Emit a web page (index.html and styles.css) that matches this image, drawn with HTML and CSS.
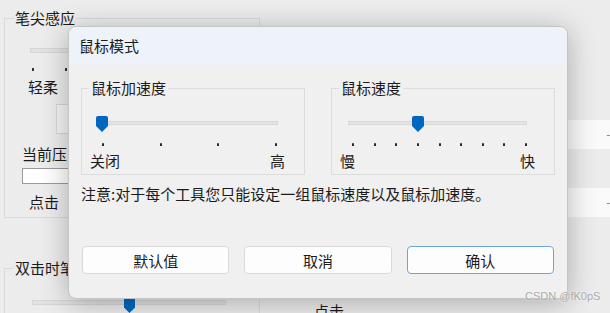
FILE: index.html
```html
<!DOCTYPE html>
<html lang="zh-CN">
<head>
  <meta charset="UTF-8" />
  <meta name="viewport" content="width=device-width, initial-scale=1.0" />
  <title>鼠标模式</title>
  <link rel="stylesheet" href="styles.css">
</head>
<body>
  <div class="backdrop">
    <div class="left-col">
      <fieldset class="bg-group first">
        <legend>笔尖感应</legend>
        <div class="bg-track"></div>
        <div class="bg-ticks"><span></span><span></span></div>
        <div class="bg-label soft">轻柔</div>
        <div class="bg-box"></div>
        <div class="bg-label press">当前压力</div>
        <div class="bg-input"></div>
        <div class="bg-label click">点击</div>
      </fieldset>
      <fieldset class="bg-group second">
        <legend>双击时笔尖</legend>
        <div class="bg-track wide">
          <div class="bg-handle"></div>
        </div>
      </fieldset>
    </div>
    <div class="mid-col">
      <div class="bg-label far">点击</div>
    </div>
    <div class="right-col">
      <div class="bg-field">-</div>
      <div class="bg-field">-</div>
    </div>
  </div>

  <div class="dialog">
    <div class="titlebar">鼠标模式</div>
    <div class="dialog-body">
      <div class="groups">
        <fieldset class="group">
          <legend>鼠标加速度</legend>
          <div class="slider accel">
            <div class="track"></div>
            <div class="handle" style="left: -6px"></div>
          </div>
          <div class="ticks accel-ticks">
            <span></span><span></span><span></span><span></span>
          </div>
          <div class="ends"><span>关闭</span><span>高</span></div>
        </fieldset>
        <fieldset class="group">
          <legend>鼠标速度</legend>
          <div class="slider speed">
            <div class="track"></div>
            <div class="handle" style="left: 64px"></div>
          </div>
          <div class="ticks speed-ticks">
            <span></span><span></span><span></span><span></span><span></span>
            <span></span><span></span><span></span><span></span>
          </div>
          <div class="ends"><span>慢</span><span>快</span></div>
        </fieldset>
      </div>
      <p class="note">注意:对于每个工具您只能设定一组鼠标速度以及鼠标加速度。</p>
      <div class="buttons">
        <button class="btn">默认值</button>
        <button class="btn">取消</button>
        <button class="btn primary">确认</button>
      </div>
    </div>
  </div>

  <div class="watermark">CSDN @fK0pS</div>
</body>
</html>
```

FILE: styles.css
```css
body {
  margin: 0;
  width: 610px;
  height: 313px;
  overflow: hidden;
  position: relative;
  background: #ececec;
  font-family: "Noto Sans CJK SC", "Noto Sans", sans-serif;
  color: #1b1b1b;
}

/* window behind the dialog */
.backdrop {
  display: flex;
  height: 313px;
}
.left-col {
  width: 256px;
  padding-left: 4px;
}
.bg-group {
  border: 1px solid #dadada;
  margin: 0;
  padding: 0;
  height: 210px;
  box-sizing: border-box;
}
.bg-group legend {
  font-size: 15px;
  line-height: 20px;
  padding: 0 1px;
  margin-left: 9px;
}
.bg-group.first {
  margin-top: 8px;
}
.bg-group.second {
  margin-top: 40px;
  height: 60px;
}
.bg-track {
  margin: 20px 0 0 25px;
  width: 160px;
  height: 3px;
  background: #e2e2e2;
  border: 1px solid #d6d6d6;
}
.bg-track.wide {
  margin: 22px 0 0 27px;
  width: 192px;
  position: relative;
}
.bg-handle {
  position: absolute;
  left: 91px;
  top: -2px;
  width: 11px;
  height: 14px;
  background: #0067c0;
  clip-path: polygon(0 0, 100% 0, 100% 60%, 50% 100%, 0 60%);
}
.bg-ticks {
  display: flex;
  gap: 31px;
  margin: 15px 0 0 27px;
}
.bg-ticks span {
  width: 2px;
  height: 3px;
  background: #333;
}
.bg-label {
  font-size: 15px;
  line-height: 20px;
}
.bg-label.soft {
  margin: 6px 0 0 23px;
}
.bg-box {
  margin: 7px 0 0 51px;
  height: 28px;
  border: 1px solid #d6d6d6;
  border-right: none;
  background: #f4f4f4;
}
.bg-label.press {
  margin: 10px 0 0 17px;
}
.bg-input {
  margin: 4px 0 0 17px;
  height: 14px;
  border: 1px solid #9a9a9a;
  border-right: none;
  background: #fff;
}
.bg-label.click {
  margin: 8px 0 0 24px;
}
.mid-col {
  width: 290px;
}
.bg-label.far {
  margin: 301px 0 0 54px;
}
.right-col {
  flex: 1;
  padding-top: 120px;
  display: flex;
  flex-direction: column;
  gap: 39px;
}
.bg-field {
  height: 29px;
  background: #fafafa;
  font-size: 10px;
  line-height: 28px;
  text-align: right;
  color: #555;
}

/* dialog */
.dialog {
  position: absolute;
  left: 68px;
  top: 26px;
  width: 500px;
  height: 273px;
  box-sizing: border-box;
  border: 1px solid #c4c4c4;
  border-radius: 8px;
  background: #f0f0f0;
  overflow: hidden;
  box-shadow: 0 4px 28px rgba(0, 0, 0, 0.28);
}
.titlebar {
  height: 38px;
  line-height: 38px;
  padding-left: 10px;
  font-size: 15px;
  background: #eef2f9;
}
.dialog-body {
  padding: 0 12px;
}
.groups {
  display: flex;
  gap: 26px;
  margin-top: 12px;
}
.group {
  width: 224px;
  height: 98px;
  box-sizing: border-box;
  margin: 0;
  padding: 0;
  border: 1px solid #dcdcdc;
}
.group legend {
  font-size: 15px;
  line-height: 22px;
  padding: 0 2px;
  margin-left: 7px;
}
.slider {
  position: relative;
  height: 16px;
  margin-top: 17px;
}
.track {
  position: absolute;
  left: 0;
  right: 0;
  top: 5px;
  height: 4px;
  background: #e4e4e4;
  border: 1px solid #d8d8d8;
  box-sizing: border-box;
}
.handle {
  position: absolute;
  top: 0;
  width: 12px;
  height: 16px;
  border-radius: 2px 2px 0 0;
  background: #0067c0;
  clip-path: polygon(0 0, 100% 0, 100% 62%, 50% 100%, 0 62%);
}
.accel {
  margin-left: 20px;
  width: 176px;
}
.speed {
  margin-left: 16px;
  width: 179px;
}
.ticks {
  display: flex;
  justify-content: space-between;
  margin: 11px 0 0 20px;
  width: 175px;
  height: 3px;
}
.ticks span {
  width: 2px;
  height: 3px;
  background: #2a2a2a;
  border-radius: 1px 1px 0 0;
}
.ends {
  display: flex;
  justify-content: space-between;
  margin: 5px 19px 0 8px;
  font-size: 15px;
  line-height: 20px;
}
.note {
  margin: 9px 0 0 0;
  font-size: 15px;
  line-height: 20px;
}
.buttons {
  display: flex;
  gap: 15px;
  margin-top: 42px;
  padding: 0 1px;
}
.btn {
  flex: 1;
  height: 28px;
  font-family: inherit;
  font-size: 15px;
  color: #1b1b1b;
  background: #fdfdfd;
  border: 1px solid #d9d9d9;
  border-radius: 4px;
  padding: 0;
}
.btn.primary {
  border-color: #6ba5de;
}

.watermark {
  position: absolute;
  left: 525px;
  top: 290px;
  font-family: "Liberation Sans", sans-serif;
  font-size: 11px;
  color: #a9a9a9;
  text-shadow: 0 0 2px #fff;
}
```
